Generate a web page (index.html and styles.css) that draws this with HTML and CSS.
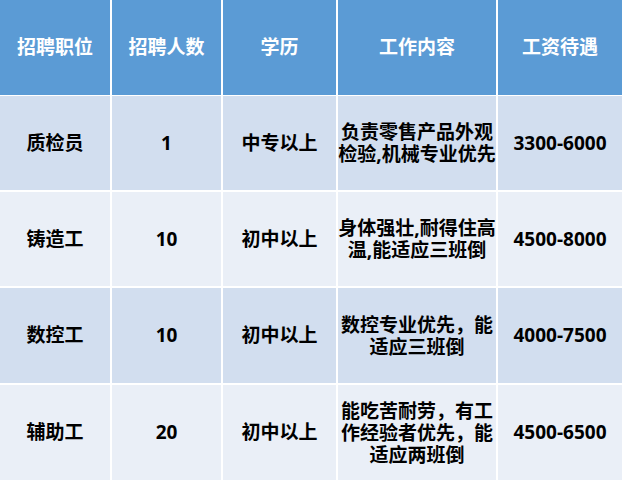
FILE: index.html
```html
<!DOCTYPE html>
<html lang="zh-CN">
<head>
<meta charset="utf-8">
<link rel="stylesheet" href="styles.css">
</head>
<body>
<div class="table">
  <div class="cell head">招聘职位</div>
  <div class="cell head">招聘人数</div>
  <div class="cell head">学历</div>
  <div class="cell head">工作内容</div>
  <div class="cell head">工资待遇</div>

  <div class="cell odd">质检员</div>
  <div class="cell odd">1</div>
  <div class="cell odd">中专以上</div>
  <div class="cell odd desc">负责零售产品外观<br>检验,机械专业优先</div>
  <div class="cell odd">3300-6000</div>

  <div class="cell even">铸造工</div>
  <div class="cell even">10</div>
  <div class="cell even">初中以上</div>
  <div class="cell even desc">身体强壮,耐得住高<br>温,能适应三班倒</div>
  <div class="cell even">4500-8000</div>

  <div class="cell odd">数控工</div>
  <div class="cell odd">10</div>
  <div class="cell odd">初中以上</div>
  <div class="cell odd desc">数控专业优先，能<br>适应三班倒</div>
  <div class="cell odd">4000-7500</div>

  <div class="cell even">辅助工</div>
  <div class="cell even">20</div>
  <div class="cell even">初中以上</div>
  <div class="cell even desc">能吃苦耐劳，有工<br>作经验者优先，能<br>适应两班倒</div>
  <div class="cell even">4500-6500</div>
</div>
</body>
</html>
```
FILE: styles.css
```css
html, body {
  margin: 0;
  padding: 0;
  background: #ffffff;
}

.table {
  width: 622px;
  height: 480px;
  display: grid;
  grid-template-columns: 110px 109px 113px 158px 124px;
  grid-template-rows: 94px 94px 94px 95px 95px;
  column-gap: 2px;
  row-gap: 2px;
  background: #ffffff;
  font-family: "Open Sans", "Noto Sans CJK SC", sans-serif;
  font-weight: 700;
  font-size: 19px;
  color: #000000;
}

.cell {
  display: flex;
  align-items: center;
  justify-content: center;
  text-align: center;
  white-space: nowrap;
  line-height: 23px;
}

.head {
  background: #5b9bd5;
  color: #ffffff;
  margin-bottom: -1px;
}

.odd {
  background: #d2deef;
}

.even {
  background: #eaeff7;
}

.desc {
  line-height: 22px;
}
```
